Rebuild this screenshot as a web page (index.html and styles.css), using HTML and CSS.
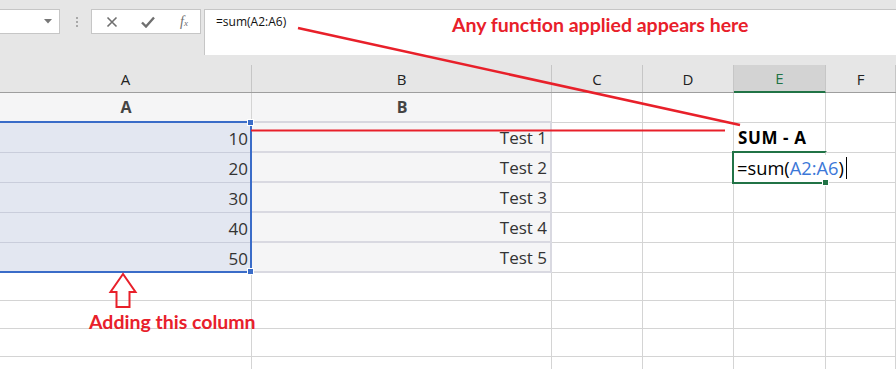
FILE: index.html
```html
<!DOCTYPE html>
<html lang="en">
<head>
    <meta charset="UTF-8">
    <meta name="viewport" content="width=device-width, initial-scale=1.0">
    <title>Sum - Excel</title>
    <link rel="stylesheet" href="styles.css">
</head>
<body>

<div class="toolbar">
    <div class="name-box">
        <svg class="drop" width="8" height="5" viewBox="0 0 8 5"><path d="M0 0h8L4 4.5z" fill="#777"/></svg>
    </div>
    <div class="grip"><span></span><span></span><span></span></div>
    <div class="fx-box">
        <svg width="12" height="12" viewBox="0 0 12 12"><path d="M1.5 1.5l9 9M10.5 1.5l-9 9" stroke="#6f6f6f" stroke-width="1.6"/></svg>
        <svg width="14" height="12" viewBox="0 0 14 12"><path d="M1 6.5l4 4L13 1.5" stroke="#6f6f6f" stroke-width="2.4" fill="none"/></svg>
        <span class="fx">f<sub>x</sub></span>
    </div>
    <div class="formula">=sum(A2:A6)</div>
</div>

<div class="colhead">
    <div class="ch">A</div>
    <div class="ch">B</div>
    <div class="ch">C</div>
    <div class="ch">D</div>
    <div class="ch ch-active">E</div>
    <div class="ch">F</div>
</div>

<div class="sheet">
    <div class="cell th">A</div><div class="cell th">B</div><div class="cell"></div><div class="cell"></div><div class="cell"></div><div class="cell"></div>
    <div class="cell sel num">10</div><div class="cell tb num">Test 1</div><div class="cell"></div><div class="cell"></div><div class="cell bold">SUM - A</div><div class="cell"></div>
    <div class="cell sel num">20</div><div class="cell tb num">Test 2</div><div class="cell"></div><div class="cell"></div><div class="cell edit"></div><div class="cell"></div>
    <div class="cell sel num">30</div><div class="cell tb num">Test 3</div><div class="cell"></div><div class="cell"></div><div class="cell"></div><div class="cell"></div>
    <div class="cell sel num">40</div><div class="cell tb num">Test 4</div><div class="cell"></div><div class="cell"></div><div class="cell"></div><div class="cell"></div>
    <div class="cell sel num">50</div><div class="cell tb num">Test 5</div><div class="cell"></div><div class="cell"></div><div class="cell"></div><div class="cell"></div>
    <div class="cell short"></div><div class="cell short"></div><div class="cell short"></div><div class="cell short"></div><div class="cell short"></div><div class="cell short"></div>
    <div class="cell short"></div><div class="cell short"></div><div class="cell short"></div><div class="cell short"></div><div class="cell short"></div><div class="cell short"></div>
    <div class="cell short"></div><div class="cell short"></div><div class="cell short"></div><div class="cell short"></div><div class="cell short"></div><div class="cell short"></div>
    <div class="cell short"></div><div class="cell short"></div><div class="cell short"></div><div class="cell short"></div><div class="cell short"></div><div class="cell short"></div>
</div>

<!-- selection + annotations laid over the sheet -->
<div class="selection"><i class="h h-top"></i><i class="h h-bot"></i></div>
<div class="active-cell">
    <span class="edit-text">=sum(<span class="ref">A2:A6</span>)</span><span class="caret"></span>
    <i class="fill"></i>
</div>

<svg class="marks" width="896" height="369" viewBox="0 0 896 369">
    <line x1="298" y1="28" x2="740" y2="125" stroke="#e8202a" stroke-width="2.6"/>
    <line x1="251" y1="130.5" x2="725" y2="130.5" stroke="#e8202a" stroke-width="2.2"/>
    <path d="M123 274L110.5 292H116.5V307H129.5V292H135.5Z" fill="none" stroke="#e8202a" stroke-width="2"/>
</svg>

<div class="note note-top">Any function applied appears here</div>
<div class="note note-bottom">Adding this column</div>

</body>
</html>
```

FILE: styles.css
```css
body {
    margin: 0;
    width: 896px;
    height: 369px;
    overflow: hidden;
    position: relative;
    font-family: 'Open Sans', 'Noto Sans', sans-serif;
    background-color: #ffffff;
}

.toolbar {
    display: flex;
    align-items: flex-start;
    height: 54px;
    padding-top: 9px;
    box-sizing: border-box;
    background-color: #e6e6e6;
}

.name-box {
    width: 70px;
    height: 25px;
    margin-left: -10px;
    box-sizing: border-box;
    background: #fff;
    border: 1px solid #c6c6c6;
    display: flex;
    align-items: center;
    justify-content: flex-end;
    padding-right: 7px;
}

.grip {
    display: flex;
    flex-direction: column;
    gap: 2px;
    margin: 8px 13px 0 16px;
}

.grip span {
    width: 2px;
    height: 2px;
    background: #a8a8a8;
}

.fx-box {
    width: 110px;
    height: 25px;
    box-sizing: border-box;
    background: #fff;
    border: 1px solid #c6c6c6;
    display: flex;
    align-items: center;
    gap: 23px;
    padding-left: 14px;
}

.fx {
    font-family: 'Liberation Serif', serif;
    font-style: italic;
    font-size: 14px;
    color: #6f6f6f;
    margin-left: 2px;
}

.fx sub {
    font-size: 9px;
    vertical-align: 0;
}

.formula {
    flex: 1;
    height: 46px;
    margin-left: 3px;
    margin-right: -5px;
    box-sizing: border-box;
    background: #fff;
    border: 1px solid #c6c6c6;
    border-bottom: none;
    font-size: 12px;
    color: #111;
    padding: 3px 0 0 11px;
}

.colhead {
    display: grid;
    grid-template-columns: 252px 300px 91px 91px 92px 1fr;
    height: 39px;
    padding-top: 11px;
    box-sizing: border-box;
    background-color: #e6e6e6;
    border-bottom: 1px solid #9e9e9e;
}

.ch {
    border-right: 1px solid #c6c6c6;
    font-size: 15px;
    color: #222;
    display: flex;
    align-items: center;
    justify-content: center;
}

.ch-active {
    background: #d3d3d3;
    color: #217346;
    border-bottom: 2px solid #217346;
    margin-bottom: -1px;
}

.sheet {
    display: grid;
    grid-template-columns: 252px 300px 91px 91px 92px 1fr;
}

.cell {
    height: 30px;
    box-sizing: border-box;
    border-right: 1px solid #d4d4d4;
    border-bottom: 1px solid #d4d4d4;
    font-size: 17px;
    color: #333;
    display: flex;
    align-items: flex-end;
    padding: 0 3px 0 4px;
    white-space: nowrap;
}

.cell.short {
    height: 28px;
}

.th {
    background: #f5f5f6;
    border-bottom: 2px solid #d7d7df;
    justify-content: center;
    align-items: center;
    font-weight: bold;
    color: #444;
    font-size: 16px;
}

.sel {
    background: #e3e7f1;
    border-bottom-color: #c9cddb;
}

.tb {
    background: #f5f5f6;
    border-bottom: 2px solid #d9d9e1;
    border-right: 2px solid #d9d9e1;
}

.num {
    justify-content: flex-end;
    padding-bottom: 2px;
}

.bold {
    font-weight: bold;
    color: #000;
    font-size: 17px;
    letter-spacing: 0.6px;
    padding-bottom: 3px;
}

.selection {
    position: absolute;
    left: -2px;
    top: 121px;
    width: 254px;
    height: 152px;
    box-sizing: border-box;
    border: 2px solid #3a6cc8;
}

.h {
    position: absolute;
    right: -4px;
    width: 5px;
    height: 5px;
    background: #3a6cc8;
    border: 1px solid #fff;
}

.h-top { top: -4px; }
.h-bot { bottom: -4px; }

.active-cell {
    position: absolute;
    left: 732px;
    top: 151px;
    width: 95px;
    height: 33px;
    box-sizing: border-box;
    border: 2px solid #217346;
    border-right-color: transparent;
    display: flex;
    align-items: center;
    padding-left: 3px;
    white-space: nowrap;
}

.edit-text {
    font-size: 18.3px;
    color: #000;
    background: #fff;
    margin-bottom: 1px;
}

.ref {
    color: #3c78d8;
}

.caret {
    width: 1px;
    height: 22px;
    background: #000;
    margin-left: 2px;
    flex-shrink: 0;
}

.fill {
    position: absolute;
    right: -4px;
    bottom: -4px;
    width: 5px;
    height: 5px;
    background: #217346;
    border: 1px solid #fff;
}

.marks {
    position: absolute;
    left: 0;
    top: 0;
}

.note {
    position: absolute;
    font-family: Lato, 'Open Sans', sans-serif;
    font-weight: bold;
    font-size: 19.5px;
    color: #e8202a;
    white-space: nowrap;
}

.note-top {
    left: 452px;
    top: 13px;
}

.note-bottom {
    left: 89px;
    top: 310px;
}
```
